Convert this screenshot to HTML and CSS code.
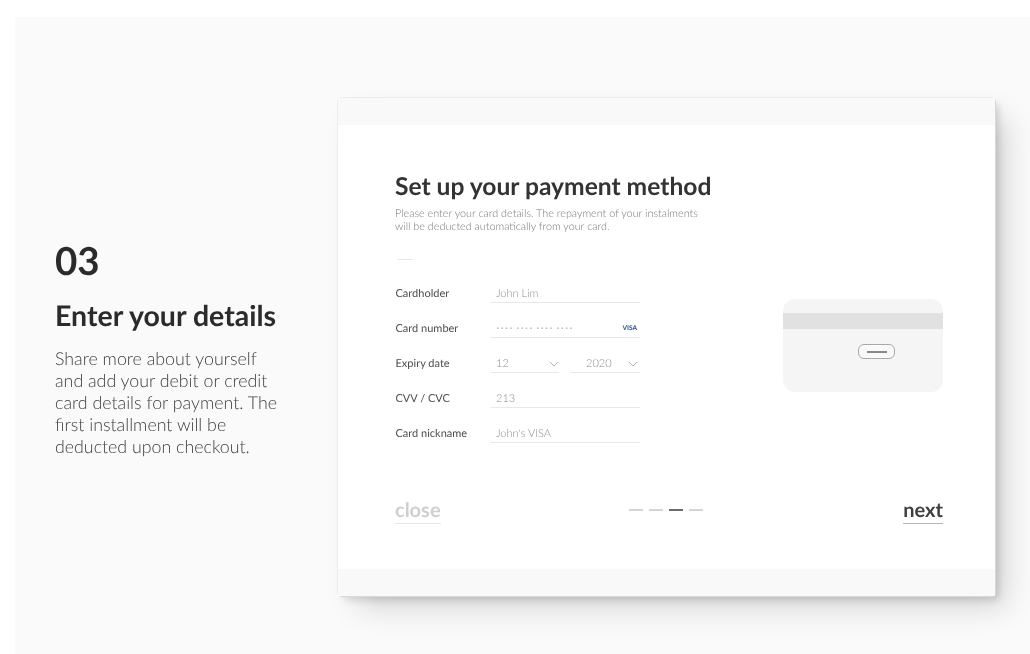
FILE: index.html
```html
<!DOCTYPE html>
<html lang="en">
<head>
<meta charset="utf-8">
<title>Enter your details</title>
<link rel="stylesheet" href="styles.css">
</head>
<body>
<main class="stage">
  <section class="intro">
    <div class="step">03</div>
    <h2 class="intro-title">Enter your details</h2>
    <p class="intro-text">Share more about yourself<br>and add your debit or credit<br>card details for payment. The<br>first installment will be<br>deducted upon checkout.</p>
  </section>
  <section class="card">
    <div class="card-band"></div>
    <div class="card-body">
      <h1 class="title">Set up your payment method</h1>
      <p class="subtitle">Please enter your card details. The repayment of your instalments<br>will be deducted automatically from your card.</p>
      <div class="rule"></div>
      <div class="form-row">
        <div class="form">
          <div class="row"><span class="label">Cardholder</span><div class="field"><span>John Lim</span></div></div>
          <div class="row"><span class="label">Card number</span><div class="field"><span class="dots">•••• •••• •••• ••••</span><span class="visa">VISA</span></div></div>
          <div class="row"><span class="label">Expiry date</span>
            <div class="split">
              <div class="field field-month"><span>12</span><svg class="chev" width="10" height="6" viewBox="0 0 10 6"><path d="M1 1l4 4 4-4" fill="none" stroke="#b4b4b4" stroke-width="1"/></svg></div>
              <div class="field field-year"><span>2020</span><svg class="chev" width="10" height="6" viewBox="0 0 10 6"><path d="M1 1l4 4 4-4" fill="none" stroke="#b4b4b4" stroke-width="1"/></svg></div>
            </div>
          </div>
          <div class="row"><span class="label">CVV / CVC</span><div class="field"><span>213</span></div></div>
          <div class="row"><span class="label">Card nickname</span><div class="field"><span>John's VISA</span></div></div>
        </div>
        <div class="cc">
          <div class="cc-stripe"></div>
          <div class="cc-slot"><i></i></div>
        </div>
      </div>
      <div class="actions">
        <a class="link link-close">close</a>
        <div class="pager"><i></i><i></i><i class="on"></i><i></i></div>
        <a class="link link-next">next</a>
      </div>
    </div>
    <div class="card-band"></div>
  </section>
</main>
</body>
</html>
```
FILE: styles.css
```css
* { box-sizing: border-box; }
html, body { margin: 0; height: 100%; background: #fff; }
body { padding: 17px 0 0 15px; font-family: Lato, "Liberation Sans", sans-serif; text-rendering: geometricPrecision; overflow: hidden; }
.stage { height: 637px; background: #fafafa; display: flex; padding: 80px 0 0 40px; }
.intro { width: 282px; flex: none; padding-top: 141px; color: #2b2b2b; filter: blur(.2px); }
.step { font-size: 38.5px; font-weight: 700; line-height: 46px; }
.intro-title { margin: 14px 0 0; font-size: 28.5px; font-weight: 700; line-height: 36px; }
.intro-text { margin: 13px 0 0; font-size: 17.8px; font-weight: 300; line-height: 22px; color: #404040; }
.card { width: 659px; height: 500px; flex: none; background: #fff; border: 1px solid #ececec; border-right-color: #dcd8d6; border-bottom-color: #dcd8d6; border-radius: 5px; display: flex; flex-direction: column; box-shadow: 5px 5px 7px -2px rgba(0,0,0,.13), 15px 15px 28px -6px rgba(0,0,0,.17); }
.card-band { height: 27px; background: #f9f9f9; flex: none; }
.card-body { flex: 1; padding: 48px 52px 0 57px; display: flex; flex-direction: column; filter: blur(.5px); }
.title { margin: 0; font-size: 24.6px; font-weight: 700; line-height: 28px; color: #333; }
.subtitle { margin: 6px 0 0; font-size: 10.8px; font-weight: 300; line-height: 13px; color: #777; }
.rule { width: 14px; height: 1px; background: #e6e6e6; margin: 26px 0 0 3px; }
.form-row { display: flex; justify-content: space-between; margin-top: 16px; }
.form { width: 245px; }
.row { display: flex; align-items: flex-start; height: 35px; }
.label { width: 96px; flex: none; padding: 11px 0 0 .5px; font-size: 11px; line-height: 14px; color: #4d4d4d; }
.field { flex: 1; height: 27px; display: flex; align-items: flex-end; justify-content: space-between; border-bottom: 1px solid #e8e8e8; padding: 0 3px 1px 5px; font-size: 11px; font-weight: 300; line-height: 14px; color: #8c8c8c; }
.dots { font-size: 6px; letter-spacing: .9px; color: #bdbdbd; line-height: 14px; }
.visa { font-size: 6.5px; font-weight: 900; line-height: 14px; background: linear-gradient(120deg, #d5a53a 0, #2a4f9e 22%); -webkit-background-clip: text; background-clip: text; color: transparent; }
.split { flex: 1; display: flex; gap: 11px; }
.field-month { flex: 0 0 68px; padding-right: 0; padding-left: 5px; }
.field-year { flex: 1; padding-left: 16px; padding-right: 2px; }
.chev { margin-bottom: 4px; }
.cc { width: 160px; height: 93px; margin-top: 23px; background: #f5f5f5; border-radius: 12px; overflow: hidden; }
.cc-stripe { height: 16px; margin-top: 14px; background: #e1e1e1; }
.cc-slot { width: 37px; height: 15px; margin: 15px 0 0 75px; background: #f9f9f9; border: 1px solid #a9a9a9; border-radius: 6px; display: flex; align-items: center; justify-content: center; }
.cc-slot i { width: 20px; height: 2px; background: #888; }
.actions { display: flex; justify-content: space-between; align-items: flex-start; margin-top: 47px; position: relative; }
.link { font-size: 20px; font-weight: 700; line-height: 24px; padding-bottom: 1px; border-bottom: 1px solid; }
.link-close { color: #cfcfcf; border-color: #e6e6e6; }
.link-next { color: #3f3f3f; border-color: #b5b5b5; }
.pager { display: flex; gap: 6px; margin-top: 11px; position: absolute; left: 234px; }
.pager i { width: 14px; height: 2px; background: #d4d4d4; }
.pager i.on { background: #6b6b6b; }
```
